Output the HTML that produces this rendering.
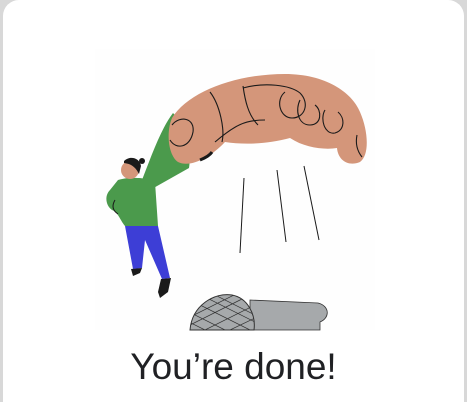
<!DOCTYPE html>
<html><head><style>
html,body{margin:0;padding:0;width:467px;height:402px;overflow:hidden;}
body{background:#d8d8d8;position:relative;font-family:"Liberation Sans",sans-serif;}
.card{position:absolute;left:3px;top:0;width:461px;height:420px;background:#fff;border-radius:16px;}
h1{position:absolute;left:0;width:467px;top:346px;margin:0;text-align:center;font-weight:400;font-size:37px;color:#202124;}
svg{position:absolute;left:0;top:0;}
</style></head><body>
<div class="card"></div>
<svg width="467" height="402" viewBox="0 0 467 402">
<rect x="95" y="49" width="280" height="281" fill="#fefefe"/>
<path d="M173,113 C185,125 192,150 189,168 L150,190 L140,185 C150,160 160,130 173,113Z" fill="#4b9a4c"/>
<path d="M172,118 C188,92 235,74 285,74 C325,74 352,92 360,112 C368,130 370,155 360,162 C348,167 338,160 337,148 C325,150 305,148 290,138 C268,144 245,145 225,142 C210,158 190,168 178,162 C168,155 166,132 172,118Z" fill="#d4967a"/>
<g fill="none" stroke="#1a1a1a" stroke-width="1.1">
<path d="M172,125 C180,115 195,118 193,132 C190,148 176,150 170,140"/>
<path d="M210,92 C220,105 225,130 222,142"/>
<path d="M215,142 C235,125 245,120 265,120"/>
<path d="M243,86 C245,100 248,115 258,125"/>
<path d="M243,88 C265,82 290,85 300,93 C310,103 305,118 292,118 C280,118 275,100 285,92"/>
<path d="M300,100 C295,110 298,125 310,125 C322,125 322,110 315,105"/>
<path d="M325,110 C320,118 324,135 335,133 C345,130 345,118 338,112"/>
<path d="M357,135 C355,145 358,152 362,157"/>
<path d="M200,160 C205,158 210,155 212,152" stroke-width="3"/>
</g>
<path d="M118,180 C130,176 150,178 155,182 L158,226 L125,226 C120,220 118,212 112,210 C106,206 104,196 110,190 Z" fill="#4b9a4c"/>
<path d="M115,200 C112,205 112,210 118,214" stroke="#1a1a1a" fill="none" stroke-width="1"/>
<circle cx="130" cy="170" r="9" fill="#d4967a"/>
<path d="M124,161 C130,155 140,158 141,166 L139,174 C136,168 132,164 124,163Z" fill="#1a1a1a"/>
<circle cx="142" cy="161" r="3" fill="#1a1a1a"/>
<path d="M125,226 L158,226 L170,278 L162,279 L145,240 L142,268 L133,269 Z" fill="#3d3ed6"/>
<path d="M131,269 L142,268 L140,273 L133,276 Z" fill="#1a1a1a"/>
<path d="M161,279 L171,278 L168,292 L160,298 L158,292 Z" fill="#1a1a1a"/>
<g stroke="#1a1a1a" stroke-width="1">
<line x1="244" y1="178" x2="240" y2="253"/>
<line x1="277" y1="170" x2="286" y2="242"/>
<line x1="304" y1="166" x2="319" y2="240"/>
</g>
<path d="M250,300 L318,303 C330,306 330,318 320,322 L320,330 L250,330Z" fill="#a6a9ab" stroke="#333" stroke-width="0.8"/>
<path d="M190,330 C192,305 215,292 232,295 C248,298 256,315 254,330Z" fill="#a6a9ab" stroke="#333" stroke-width="1"/>
<g stroke="#333" stroke-width="0.7" clip-path="url(#c)">
<path d="M190,300 L250,330 M195,292 L255,322 M205,290 L255,315 M185,310 L225,330 M185,320 L205,330 M250,295 L190,325 M255,305 L205,330 M240,292 L190,317 M225,292 L188,310 M255,318 L230,330"/>
</g>
<defs><clipPath id="c"><path d="M190,330 C192,305 215,292 232,295 C248,298 256,315 254,330Z"/></clipPath></defs>
</svg>
<h1>You’re done!</h1>
</body></html>
